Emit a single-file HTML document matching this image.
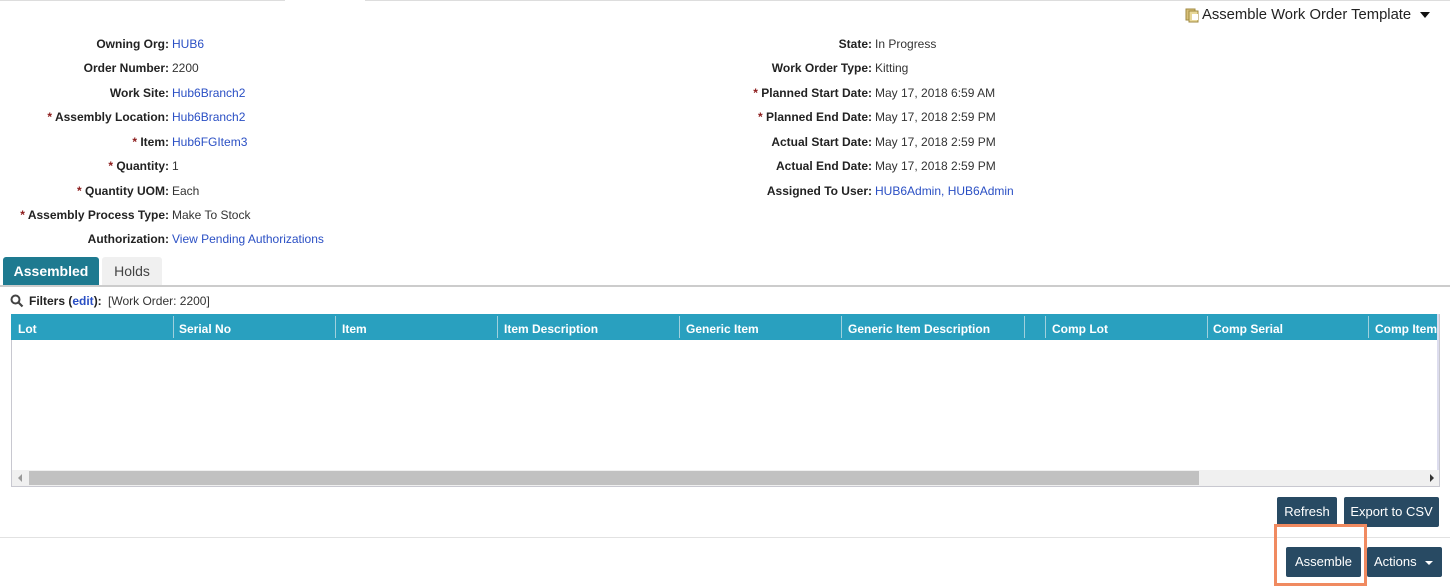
<!DOCTYPE html>
<html><head><style>
*{margin:0;padding:0;box-sizing:border-box}
body{width:1450px;height:582px;overflow:hidden;background:#fff;font-family:"Liberation Sans",sans-serif;font-size:12px;color:#222;position:relative}
.a{position:absolute;white-space:nowrap}
.l{text-align:right;font-weight:bold;color:#222}
.s{color:#8b1a1a}
.v{color:#333}
.k{color:#2a4fc4}
.btn{position:absolute;background:#284a63;color:#fff;font-size:13px;text-align:center;border-radius:2px;line-height:30px;height:30px}
</style></head><body>
<div class="a" style="left:0;top:0;width:285px;height:1px;background:#ddd"></div>
<div class="a" style="left:365px;top:0;width:1085px;height:1px;background:#ddd"></div>
<div class="a" style="left:1185px;top:7px;width:15px;height:15px">
<svg width="16" height="16"><rect x="1" y="2" width="9" height="11" fill="#d8c07a" stroke="#a08a40"/><rect x="4" y="4" width="9" height="11" fill="#e8d89a" stroke="#a08a40"/><rect x="7" y="7" width="6" height="6" fill="#fff"/></svg></div>
<div class="a" style="left:1202px;top:7px;font-size:14.8px;color:#222">Assemble Work Order Template</div>
<div class="a" style="left:1420px;top:12px;width:0;height:0;border-left:5px solid transparent;border-right:5px solid transparent;border-top:6px solid #111"></div>

<div class="a l" style="right:1281px;top:37px">Owning Org:</div><div class="a k" style="left:172px;top:37px">HUB6</div>
<div class="a l" style="right:1281px;top:61px">Order Number:</div><div class="a v" style="left:172px;top:61px">2200</div>
<div class="a l" style="right:1281px;top:86px">Work Site:</div><div class="a k" style="left:172px;top:86px">Hub6Branch2</div>
<div class="a l" style="right:1281px;top:110px"><span class="s">* </span>Assembly Location:</div><div class="a k" style="left:172px;top:110px">Hub6Branch2</div>
<div class="a l" style="right:1281px;top:135px"><span class="s">* </span>Item:</div><div class="a k" style="left:172px;top:135px">Hub6FGItem3</div>
<div class="a l" style="right:1281px;top:159px"><span class="s">* </span>Quantity:</div><div class="a v" style="left:172px;top:159px">1</div>
<div class="a l" style="right:1281px;top:184px"><span class="s">* </span>Quantity UOM:</div><div class="a v" style="left:172px;top:184px">Each</div>
<div class="a l" style="right:1281px;top:208px"><span class="s">* </span>Assembly Process Type:</div><div class="a v" style="left:172px;top:208px">Make To Stock</div>
<div class="a l" style="right:1281px;top:232px">Authorization:</div><div class="a k" style="left:172px;top:232px">View Pending Authorizations</div>

<div class="a l" style="right:578px;top:37px">State:</div><div class="a v" style="left:875px;top:37px">In Progress</div>
<div class="a l" style="right:578px;top:61px">Work Order Type:</div><div class="a v" style="left:875px;top:61px">Kitting</div>
<div class="a l" style="right:578px;top:86px"><span class="s">* </span>Planned Start Date:</div><div class="a v" style="left:875px;top:86px">May 17, 2018 6:59 AM</div>
<div class="a l" style="right:578px;top:110px"><span class="s">* </span>Planned End Date:</div><div class="a v" style="left:875px;top:110px">May 17, 2018 2:59 PM</div>
<div class="a l" style="right:578px;top:135px">Actual Start Date:</div><div class="a v" style="left:875px;top:135px">May 17, 2018 2:59 PM</div>
<div class="a l" style="right:578px;top:159px">Actual End Date:</div><div class="a v" style="left:875px;top:159px">May 17, 2018 2:59 PM</div>
<div class="a l" style="right:578px;top:184px">Assigned To User:</div><div class="a k" style="left:875px;top:184px">HUB6Admin, HUB6Admin</div>

<div class="a" style="left:3px;top:257px;width:96px;height:28px;background:#1e7a90;border-radius:3px 3px 0 0;color:#fff;font-weight:bold;font-size:14px;line-height:28px;text-align:center">Assembled</div>
<div class="a" style="left:102px;top:257px;width:60px;height:28px;background:#f0f0f0;border-radius:3px 3px 0 0;color:#444;font-size:14px;line-height:28px;text-align:center">Holds</div>
<div class="a" style="left:0;top:285px;width:1450px;height:2px;background:#ccc"></div>
<div class="a" style="left:10px;top:294px"><svg width="14" height="14"><circle cx="5.5" cy="5.5" r="4" fill="none" stroke="#444" stroke-width="2"/><line x1="8.5" y1="8.5" x2="12.5" y2="12.5" stroke="#444" stroke-width="2.2"/></svg></div>
<div class="a" style="left:29px;top:294px;font-weight:bold">Filters (<span class="k">edit</span>):</div>
<div class="a v" style="left:108px;top:294px">[Work Order: 2200]</div>

<div class="a" style="left:11px;top:314px;width:1429px;height:173px;border:1px solid #c8c8d0;border-top:none"></div>
<div class="a" style="left:11px;top:314px;width:1426px;height:26px;background:#29a0bf"></div>
<div class="a" style="left:1437px;top:314px;width:2px;height:160px;background:#dde"></div>
<div class="a" style="top:316px;left:0;width:1437px;height:22px;color:#fff;font-weight:bold;line-height:26px;overflow:hidden">
<span class="a" style="left:18px">Lot</span>
<span class="a" style="left:179px">Serial No</span>
<span class="a" style="left:342px">Item</span>
<span class="a" style="left:504px">Item Description</span>
<span class="a" style="left:686px">Generic Item</span>
<span class="a" style="left:848px">Generic Item Description</span>
<span class="a" style="left:1052px">Comp Lot</span>
<span class="a" style="left:1213px">Comp Serial</span>
<span class="a" style="left:1375px">Comp Item</span>
</div>
<div class="a" style="left:173px;top:316px;width:1px;height:22px;background:#9fd0dd"></div>
<div class="a" style="left:335px;top:316px;width:1px;height:22px;background:#9fd0dd"></div>
<div class="a" style="left:497px;top:316px;width:1px;height:22px;background:#9fd0dd"></div>
<div class="a" style="left:679px;top:316px;width:1px;height:22px;background:#9fd0dd"></div>
<div class="a" style="left:841px;top:316px;width:1px;height:22px;background:#9fd0dd"></div>
<div class="a" style="left:1024px;top:316px;width:1px;height:22px;background:#9fd0dd"></div>
<div class="a" style="left:1045px;top:316px;width:1px;height:22px;background:#9fd0dd"></div>
<div class="a" style="left:1207px;top:316px;width:1px;height:22px;background:#9fd0dd"></div>
<div class="a" style="left:1368px;top:316px;width:1px;height:22px;background:#9fd0dd"></div>

<div class="a" style="left:12px;top:470px;width:1427px;height:16px;background:#f0f0f0"></div>
<div class="a" style="left:29px;top:471px;width:1170px;height:14px;background:#c1c1c1"></div>
<div class="a" style="left:18px;top:474px;width:0;height:0;border-top:4px solid transparent;border-bottom:4px solid transparent;border-right:4px solid #999"></div>
<div class="a" style="left:1430px;top:474px;width:0;height:0;border-top:4px solid transparent;border-bottom:4px solid transparent;border-left:4px solid #333"></div>

<div class="btn" style="left:1277px;top:497px;width:60px">Refresh</div>
<div class="btn" style="left:1344px;top:497px;width:95px">Export to CSV</div>
<div class="a" style="left:0;top:537px;width:1450px;height:1px;background:#e2e2e2"></div>
<div class="btn" style="left:1286px;top:547px;width:75px">Assemble</div>
<div class="btn" style="left:1367px;top:547px;width:75px;text-align:left;padding-left:7px">Actions</div>
<div class="a" style="left:1425px;top:561px;width:0;height:0;border-left:4px solid transparent;border-right:4px solid transparent;border-top:4px solid #fff"></div>
<div class="a" style="left:1274px;top:524px;width:93px;height:62px;border:3px solid #f08a60"></div>
</body></html>
